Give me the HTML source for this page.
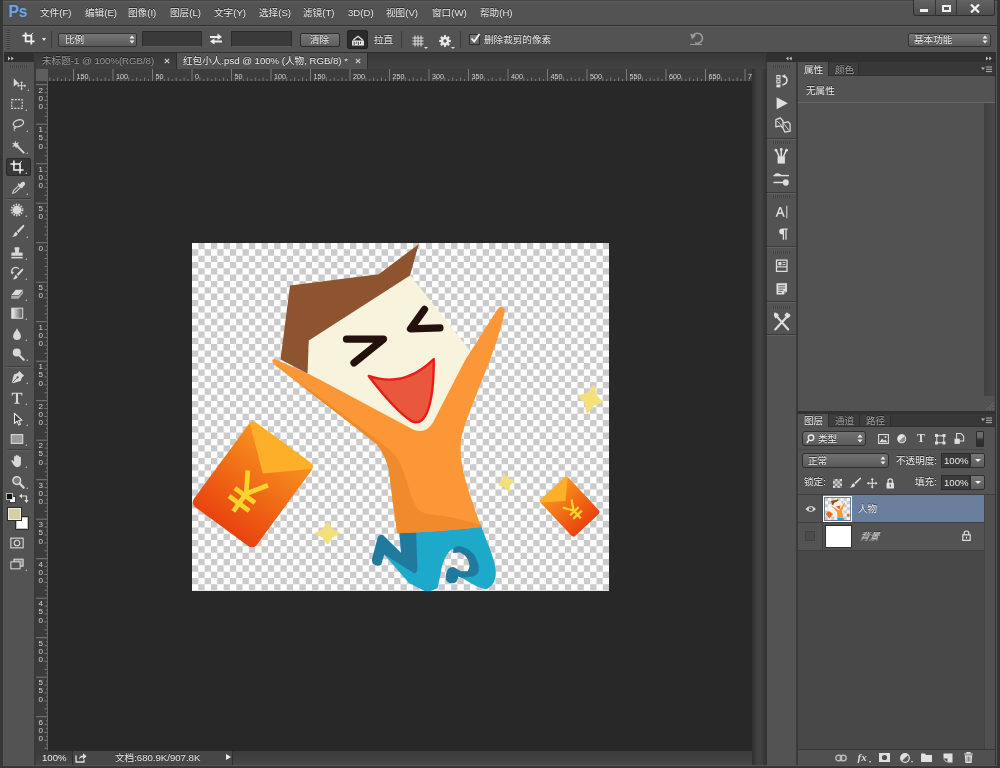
<!DOCTYPE html>
<html lang="zh"><head><meta charset="utf-8"><title>Photoshop</title>
<style>
*{box-sizing:border-box;margin:0;padding:0}
html,body{width:1000px;height:768px;overflow:hidden;background:#3a3a3a}
body{position:relative;font-family:"Liberation Sans","Noto Sans CJK SC",sans-serif;font-size:9.6px;color:#ebebeb;line-height:1}
.a{position:absolute}
.t{white-space:nowrap;display:inline-block;filter:drop-shadow(0 -0.8px 0 rgba(0,0,0,.55))}
.lbl{position:absolute;white-space:nowrap;will-change:transform}
.gs{will-change:transform}
svg{display:inline-block}
/* frame */
#menubar{left:3px;top:0;width:994px;height:26px;background:linear-gradient(#3c3c3c 0,#5c5c5c 1.5px,#535353 3px);border-bottom:1px solid #303030}
#optbar{left:3px;top:26px;width:994px;height:27px;background:linear-gradient(#636363 0,#535353 1.5px);border-bottom:1px solid #2e2e2e}
#tools{left:4px;top:53px;width:30px;height:712px;background:#535353}
#toolshead{left:4px;top:53px;width:30px;height:9px;background:#2f2f2f}
#doc{left:36px;top:53px;width:716px;height:712px;background:#282828}
#doctabs{left:36px;top:53px;width:729px;height:16px;background:linear-gradient(#383838,#424242)}
#hruler{left:36px;top:68.5px;width:716px;height:12.5px;background:#3d3d3d}
#vruler{left:36px;top:81px;width:12px;height:670px;background:#3b3b3b}
#status{left:36px;top:751px;width:716px;height:14px;background:linear-gradient(#3a3a3a,#474747)}
#gap{left:752px;top:69px;width:15px;height:696px;background:linear-gradient(90deg,#303030 0,#424242 40%,#434343 60%,#363636 85%,#323232 100%)}
#strip{left:767px;top:53px;width:29px;height:712px;background:#535353}
#striphead{left:766px;top:53px;width:31px;height:9px;background:#303030}
#rp{left:798px;top:53px;width:199px;height:712px;background:#535353}
#rphead{left:797px;top:53px;width:200px;height:9px;background:#303030}
</style></head><body>
<div id="menubar" class="a"></div>
<div id="optbar" class="a"></div>
<div id="tools" class="a"></div><div id="toolshead" class="a"></div>
<div id="doc" class="a"></div><div id="doctabs" class="a"></div><div id="hruler" class="a"></div><div id="vruler" class="a"></div><div id="status" class="a"></div>
<div id="gap" class="a"></div>
<div id="strip" class="a"></div><div id="striphead" class="a"></div>
<div id="rp" class="a"></div><div id="rphead" class="a"></div>
<div class="a" style="left:8.5px;top:3.5px;font-size:15.6px;font-weight:bold;color:#74a3d6;letter-spacing:-0.2px;text-shadow:0 0 3px #2a4f80">Ps</div>
<div class="lbl" style="left:40px;top:8px"><span class="t">文件(F)</span></div>
<div class="lbl" style="left:85px;top:8px"><span class="t">编辑(E)</span></div>
<div class="lbl" style="left:128px;top:8px"><span class="t">图像(I)</span></div>
<div class="lbl" style="left:170px;top:8px"><span class="t">图层(L)</span></div>
<div class="lbl" style="left:214px;top:8px"><span class="t">文字(Y)</span></div>
<div class="lbl" style="left:259px;top:8px"><span class="t">选择(S)</span></div>
<div class="lbl" style="left:303px;top:8px"><span class="t">滤镜(T)</span></div>
<div class="lbl" style="left:348px;top:8px"><span class="t">3D(D)</span></div>
<div class="lbl" style="left:386px;top:8px"><span class="t">视图(V)</span></div>
<div class="lbl" style="left:432px;top:8px"><span class="t">窗口(W)</span></div>
<div class="lbl" style="left:480px;top:8px"><span class="t">帮助(H)</span></div>
<div class="a" style="left:913px;top:0;width:82px;height:16px;border:1px solid #2e2e2e;border-top:0;border-radius:0 0 3px 3px;background:linear-gradient(#626262,#4e4e4e)"></div>
<div class="a" style="left:935px;top:0;width:1px;height:15px;background:#333"></div>
<div class="a" style="left:956px;top:0;width:1px;height:15px;background:#333"></div>
<div class="a" style="left:920px;top:9px;width:8px;height:3px;background:#f0f0f0"></div>
<div class="a" style="left:942px;top:5px;width:9px;height:7px;border:2px solid #f0f0f0"></div>
<svg class="a" style="left:970px;top:4px" width="10" height="9" viewBox="0 0 10 9"><path d="M1 0.5L9 8.5M9 0.5L1 8.5" stroke="#f0f0f0" stroke-width="2.2"/></svg>

<div class="a" style="left:7px;top:30px;width:3px;height:19px;background:repeating-linear-gradient(#3c3c3c 0 1px,#5c5c5c 1px 2px)"></div>
<svg class="a" style="left:21.5px;top:31.5px" width="13" height="13" viewBox="0 0 16 16"><path d="M4.5 0.5V11.5H15.5M0.5 4.5H11.5V15.5" fill="none" stroke="#f0f0f0" stroke-width="2.2"/><path d="M13.5 1L10.5 4.5" stroke="#e8e8e8" stroke-width="1.2"/></svg>
<div class="a" style="left:42px;top:38px;border:2.5px solid transparent;border-top:3px solid #e8e8e8"></div>
<div class="a" style="left:51px;top:31px;width:1px;height:17px;background:#3a3a3a"></div>
<div class="a" style="left:58px;top:32.5px;width:79px;height:14.5px;border:1px solid #333;border-radius:2px;background:linear-gradient(#757575,#5a5a5a)"></div>
<div class="lbl" style="left:65px;top:35px"><span class="t">比例</span></div>
<svg class="a" style="left:129px;top:35px" width="6" height="9" viewBox="0 0 6 9"><path d="M0.5 3.5L3 0.5L5.5 3.5ZM0.5 5.5L3 8.5L5.5 5.5Z" fill="#eee"/></svg>
<div class="a" style="left:142px;top:31px;width:60px;height:16px;background:#3a3a3a;border:1px solid #2b2b2b;border-bottom-color:#5a5a5a"></div>
<svg class="a" style="left:210px;top:33px" width="12" height="12" viewBox="0 0 12 12"><path d="M0 3H7.5V0.6L12 4L7.5 7V5H0ZM12 7.5H4.5V5.2L0 8.4L4.5 11.6V9.5H12Z" fill="#ececec"/></svg>
<div class="a" style="left:231px;top:31px;width:61px;height:16px;background:#3a3a3a;border:1px solid #2b2b2b;border-bottom-color:#5a5a5a"></div>
<div class="a" style="left:300px;top:33px;width:40px;height:13.5px;border:1px solid #2d2d2d;border-radius:2px;background:linear-gradient(#777,#5e5e5e)"></div>
<div class="lbl" style="left:310px;top:35px"><span class="t">清除</span></div>
<div class="a" style="left:347px;top:30px;width:21px;height:19px;background:#2b2b2b;border:1px solid #222;border-radius:2px"></div>
<svg class="a" style="left:350.5px;top:35px" width="14" height="11" viewBox="0 0 15 13"><path d="M0.5 6.5H14.5V12.5H0.5Z" fill="#e8e8e8"/><path d="M2 6L7.5 1.5L13 6" fill="none" stroke="#e8e8e8" stroke-width="1.6"/><path d="M3 8V12M5.5 8V10.5M8 8V12M10.5 8V10.5" stroke="#2b2b2b" stroke-width="1"/></svg>
<div class="lbl" style="left:374px;top:35px"><span class="t">拉直</span></div>
<div class="a" style="left:401px;top:31px;width:1px;height:17px;background:#3a3a3a"></div>
<svg class="a" style="left:411.5px;top:34.5px" width="12" height="12" viewBox="0 0 14 14"><path d="M0.5 3.5H13.5M0.5 7H13.5M0.5 10.5H13.5M3.5 0.5V13.5M7 0.5V13.5M10.5 0.5V13.5" stroke="#e8e8e8" stroke-width="1.1" fill="none"/></svg>
<div class="a" style="left:424px;top:47px;border:2px solid transparent;border-top:2.5px solid #ddd"></div>
<svg class="a" style="left:438.5px;top:34.5px" width="12" height="12" viewBox="-7 -7 14 14"><g fill="#e8e8e8"><circle r="4.6"/><g id="gt"><rect x="-1.3" y="-6.8" width="2.6" height="13.6"/><rect x="-6.8" y="-1.3" width="13.6" height="2.6"/></g><use href="#gt" transform="rotate(45)"/></g><circle r="2" fill="#535353"/></svg>
<div class="a" style="left:451px;top:47px;border:2px solid transparent;border-top:2.5px solid #ddd"></div>
<div class="a" style="left:460px;top:31px;width:1px;height:17px;background:#3a3a3a"></div>
<div class="a" style="left:469px;top:34px;width:11px;height:11px;background:linear-gradient(#7a7a7a,#606060);border:1px solid #2e2e2e"></div>
<svg class="a" style="left:470px;top:33px" width="11" height="11" viewBox="0 0 11 11"><path d="M1.5 5.5L4.2 8.5L9.5 1" fill="none" stroke="#f4f4f4" stroke-width="1.8"/></svg>
<div class="lbl" style="left:484px;top:35px"><span class="t">删除裁剪的像素</span></div>
<svg class="a" style="left:689px;top:30px" width="16" height="16" viewBox="0 0 16 16"><path d="M4 6A5 5 0 1 1 6 12.6" fill="none" stroke="#9a9a9a" stroke-width="1.6"/><path d="M1 3.5L7 5.5L3 9.5Z" fill="#9a9a9a"/><path d="M1 14.5H13" stroke="#9a9a9a" stroke-width="1"/></svg>
<div class="a" style="left:908px;top:32.5px;width:83px;height:14.5px;border:1px solid #333;border-radius:2px;background:linear-gradient(#757575,#5a5a5a)"></div>
<div class="lbl" style="left:914px;top:35px"><span class="t">基本功能</span></div>
<svg class="a" style="left:982px;top:35px" width="6" height="9" viewBox="0 0 6 9"><path d="M0.5 3.5L3 0.5L5.5 3.5ZM0.5 5.5L3 8.5L5.5 5.5Z" fill="#eee"/></svg>

<svg class="a" style="left:7.5px;top:55.5px" width="6.5" height="5" viewBox="0 0 8 6"><path d="M0 0.5L3 3L0 5.5ZM4 0.5L7 3L4 5.5Z" fill="#c4c4c4"/></svg>
<div class="a" style="left:10px;top:65px;width:17px;height:3px;background:repeating-linear-gradient(90deg,#424242 0 1px,#595959 1px 2px)"></div>
<div class="a" style="left:6px;top:158px;width:25px;height:18px;background:#383838;border-radius:2px;border:1px solid #2a2a2a"></div>
<div class="a" style="left:7px;top:197.5px;width:24px;height:1px;background:#3e3e3e;border-bottom:1px solid #606060;height:2px"></div>
<div class="a" style="left:7px;top:365.5px;width:24px;height:1px;background:#3e3e3e;border-bottom:1px solid #606060;height:2px"></div>
<div class="a" style="left:7px;top:449.0px;width:24px;height:1px;background:#3e3e3e;border-bottom:1px solid #606060;height:2px"></div>
<svg class="a" style="left:11.6px;top:77.0px" width="14" height="14" viewBox="0 0 16 16"><path d="M2 1.5V11L4.6 8.6L8.6 8.4Z" fill="#d8d8d8"/><path d="M11 6V14M7 10H15" stroke="#d8d8d8" stroke-width="1.1"/><path d="M11 4.8L12.6 6.8H9.4ZM11 15.2L12.6 13.2H9.4ZM5.8 10L7.8 8.4V11.6ZM16.2 10L14.2 8.4V11.6Z" fill="#d8d8d8"/></svg>
<div class="a" style="left:26.6px;top:89.0px;width:0;height:0;border-left:2.5px solid transparent;border-bottom:2.5px solid #b0b0b0"></div>
<svg class="a" style="left:10.0px;top:97.0px" width="14" height="14" viewBox="0 0 16 16"><rect x="2" y="3" width="12" height="10" fill="none" stroke="#d8d8d8" stroke-width="1.3" stroke-dasharray="2.2 1.4"/></svg>
<div class="a" style="left:25.0px;top:109.0px;width:0;height:0;border-left:2.5px solid transparent;border-bottom:2.5px solid #b0b0b0"></div>
<svg class="a" style="left:11.0px;top:118.0px" width="14" height="14" viewBox="0 0 16 16"><ellipse cx="8.5" cy="6" rx="6" ry="3.8" transform="rotate(-18 8.5 6)" fill="none" stroke="#d8d8d8" stroke-width="1.5"/><path d="M4.5 9.5C3 10.5 3.5 12.5 5 12C6 11.5 5 10 4 11.5C3.5 12.5 3.5 14 4.5 15" fill="none" stroke="#d8d8d8" stroke-width="1.1"/></svg>
<div class="a" style="left:26.0px;top:130.0px;width:0;height:0;border-left:2.5px solid transparent;border-bottom:2.5px solid #b0b0b0"></div>
<svg class="a" style="left:11.0px;top:139.5px" width="14" height="14" viewBox="0 0 16 16"><path d="M6.5 6.5L14.5 14.5" stroke="#d8d8d8" stroke-width="2.2" stroke-linecap="round"/><path d="M5 0.5L6 3.6L9.2 2.4L7.4 5L9.8 7L6.6 7L6 10L4.6 7.2L1.4 8L3.4 5.4L0.8 3.4L4 3.6Z" fill="#d8d8d8"/></svg>
<div class="a" style="left:26.0px;top:151.5px;width:0;height:0;border-left:2.5px solid transparent;border-bottom:2.5px solid #b0b0b0"></div>
<svg class="a" style="left:10.0px;top:160.0px" width="14" height="14" viewBox="0 0 16 16"><path d="M4.5 0.5V11.5H15.5M0.5 4.5H11.5V15.5" fill="none" stroke="#f2f2f2" stroke-width="1.8"/><path d="M13.5 1L10.5 4.5" stroke="#f2f2f2" stroke-width="1"/></svg>
<div class="a" style="left:25.0px;top:172.0px;width:0;height:0;border-left:2.5px solid transparent;border-bottom:2.5px solid #b0b0b0"></div>
<svg class="a" style="left:11.0px;top:181.0px" width="14" height="14" viewBox="0 0 16 16"><path d="M2 14L3 11L9 5L11 7L5 13Z" fill="none" stroke="#d8d8d8" stroke-width="1.2"/><path d="M8.5 3.5L12.5 7.5M10 5L12.5 2.2Q14 1 15 2.3Q15.8 3.4 14.6 4.6L12 7" fill="#d8d8d8" stroke="#d8d8d8" stroke-width="1.6" stroke-linecap="round"/></svg>
<div class="a" style="left:26.0px;top:193.0px;width:0;height:0;border-left:2.5px solid transparent;border-bottom:2.5px solid #b0b0b0"></div>
<svg class="a" style="left:10.0px;top:202.5px" width="14" height="14" viewBox="0 0 16 16"><circle cx="8" cy="8" r="5" fill="#d8d8d8"/><circle cx="8" cy="8" r="6.2" fill="none" stroke="#d8d8d8" stroke-width="2.2" stroke-dasharray="1.6 1.4"/></svg>
<div class="a" style="left:25.0px;top:214.5px;width:0;height:0;border-left:2.5px solid transparent;border-bottom:2.5px solid #b0b0b0"></div>
<svg class="a" style="left:10.5px;top:224.0px" width="14" height="14" viewBox="0 0 16 16"><path d="M14.8 1.2Q15.6 2 14.8 3L8.5 10.2L6.6 8.4L13.4 1.4Q14.2 0.7 14.8 1.2Z" fill="#d8d8d8"/><path d="M5.8 9.2L7.8 11.2Q7 14.5 1 14.8Q3.6 13 3.8 11.2Q4.2 9.4 5.8 9.2Z" fill="#d8d8d8"/></svg>
<div class="a" style="left:25.5px;top:236.0px;width:0;height:0;border-left:2.5px solid transparent;border-bottom:2.5px solid #b0b0b0"></div>
<svg class="a" style="left:10.0px;top:246.0px" width="14" height="14" viewBox="0 0 16 16"><path d="M6 1.5H10Q11 1.5 10.8 2.6L10 7.5H13.5Q14.5 7.5 14.5 8.5V11H1.5V8.5Q1.5 7.5 2.5 7.5H6L5.2 2.6Q5 1.5 6 1.5Z" fill="#d8d8d8"/><rect x="1.5" y="12.4" width="13" height="1.8" fill="#d8d8d8"/></svg>
<div class="a" style="left:25.0px;top:258.0px;width:0;height:0;border-left:2.5px solid transparent;border-bottom:2.5px solid #b0b0b0"></div>
<svg class="a" style="left:10.0px;top:266.0px" width="14" height="14" viewBox="0 0 16 16"><path d="M14.8 3.2Q15.6 4 14.8 5L9.5 11.2L7.6 9.4L13.4 3.4Q14.2 2.7 14.8 3.2Z" fill="#d8d8d8"/><path d="M6.8 10.2L8.8 12.2Q8 15 3 15.2Q5 13.6 5.2 12.2Q5.4 10.6 6.8 10.2Z" fill="#d8d8d8"/><path d="M2.5 8A4.5 4.5 0 0 1 10 3.2" fill="none" stroke="#d8d8d8" stroke-width="1.4"/><path d="M0.6 6.4L4.6 6.8L2.4 10Z" fill="#d8d8d8"/></svg>
<div class="a" style="left:25.0px;top:278.0px;width:0;height:0;border-left:2.5px solid transparent;border-bottom:2.5px solid #b0b0b0"></div>
<svg class="a" style="left:10.0px;top:287.0px" width="14" height="14" viewBox="0 0 16 16"><path d="M6.5 3L15 3L9.8 9.5L1.4 9.5Z" fill="#d8d8d8"/><path d="M1.4 10.4H9.8L15 4V7.2L9.8 13.4H1.4Z" fill="#a8a8a8"/></svg>
<div class="a" style="left:25.0px;top:299.0px;width:0;height:0;border-left:2.5px solid transparent;border-bottom:2.5px solid #b0b0b0"></div>
<svg class="a" style="left:10.0px;top:306.0px" width="14" height="14" viewBox="0 0 16 16"><defs><linearGradient id="tg" x1="0" y1="0" x2="1" y2="0"><stop offset="0" stop-color="#f4f4f4"/><stop offset="1" stop-color="#555"/></linearGradient></defs><rect x="2" y="2.5" width="12.5" height="11.5" fill="url(#tg)" stroke="#d8d8d8" stroke-width="1.2"/></svg>
<div class="a" style="left:25.0px;top:318.0px;width:0;height:0;border-left:2.5px solid transparent;border-bottom:2.5px solid #b0b0b0"></div>
<svg class="a" style="left:10.0px;top:326.5px" width="14" height="14" viewBox="0 0 16 16"><path d="M8 1.5C9.6 5 12.5 7.4 12.5 10.4A4.5 4.5 0 0 1 3.5 10.4C3.5 7.4 6.4 5 8 1.5Z" fill="#d8d8d8"/></svg>
<div class="a" style="left:25.0px;top:338.5px;width:0;height:0;border-left:2.5px solid transparent;border-bottom:2.5px solid #b0b0b0"></div>
<svg class="a" style="left:10.5px;top:347.0px" width="14" height="14" viewBox="0 0 16 16"><circle cx="6.6" cy="6.2" r="4.6" fill="#d8d8d8"/><path d="M9.8 9.6L14.5 14.5" stroke="#d8d8d8" stroke-width="2.4" stroke-linecap="round"/></svg>
<div class="a" style="left:25.5px;top:359.0px;width:0;height:0;border-left:2.5px solid transparent;border-bottom:2.5px solid #b0b0b0"></div>
<svg class="a" style="left:10.5px;top:369.5px" width="14" height="14" viewBox="0 0 16 16"><path d="M9.5 1L15 6.5L12.6 8.2L11 12.6L2 15L1 14L3.4 5L7.8 3.4Z" fill="#d8d8d8"/><path d="M1.8 14.2L7 9" stroke="#535353" stroke-width="1"/><circle cx="7.6" cy="8.4" r="1.3" fill="#535353"/></svg>
<div class="a" style="left:25.5px;top:381.5px;width:0;height:0;border-left:2.5px solid transparent;border-bottom:2.5px solid #b0b0b0"></div>
<svg class="a" style="left:10.0px;top:391.0px" width="14" height="14" viewBox="0 0 16 16"><path d="M2 2H14V5.4H13.2Q13 3.4 11.4 3.2H9.2V12.6Q9.2 13.6 11 13.7V14.5H5V13.7Q6.8 13.6 6.8 12.6V3.2H4.6Q3 3.4 2.8 5.4H2Z" fill="#d8d8d8"/></svg>
<div class="a" style="left:25.0px;top:403.0px;width:0;height:0;border-left:2.5px solid transparent;border-bottom:2.5px solid #b0b0b0"></div>
<svg class="a" style="left:10.5px;top:411.5px" width="14" height="14" viewBox="0 0 16 16"><path d="M4 1.5V13L6.8 10.4L8.8 15L10.8 14.1L8.8 9.7L12.6 9.5Z" fill="#3a3a3a" stroke="#f0f0f0" stroke-width="1.2" stroke-linejoin="round"/></svg>
<div class="a" style="left:25.5px;top:423.5px;width:0;height:0;border-left:2.5px solid transparent;border-bottom:2.5px solid #b0b0b0"></div>
<svg class="a" style="left:10.0px;top:432.0px" width="14" height="14" viewBox="0 0 16 16"><rect x="1.5" y="3" width="13" height="10" fill="#9a9a9a" stroke="#d8d8d8" stroke-width="1.3"/></svg>
<div class="a" style="left:25.0px;top:444.0px;width:0;height:0;border-left:2.5px solid transparent;border-bottom:2.5px solid #b0b0b0"></div>
<svg class="a" style="left:10.0px;top:454.0px" width="14" height="14" viewBox="0 0 16 16"><path d="M4.6 9V3.6Q4.6 2.4 5.6 2.4Q6.5 2.4 6.5 3.6V2.2Q6.5 1 7.6 1Q8.6 1 8.6 2.2V2.8Q8.6 1.8 9.6 1.8Q10.6 1.8 10.6 3V4Q10.6 3.2 11.5 3.2Q12.5 3.2 12.5 4.4V10Q12.5 15 8.2 15Q5.6 15 4.2 12.6L1.6 8.4Q1.2 7.4 2 7Q2.8 6.6 3.6 7.6Z" fill="#d8d8d8"/></svg>
<div class="a" style="left:25.0px;top:466.0px;width:0;height:0;border-left:2.5px solid transparent;border-bottom:2.5px solid #b0b0b0"></div>
<svg class="a" style="left:10.5px;top:475.0px" width="14" height="14" viewBox="0 0 16 16"><circle cx="6.6" cy="6.4" r="4.4" fill="#7a7a7a" stroke="#d8d8d8" stroke-width="1.7"/><path d="M10 9.8L14.4 14.4" stroke="#d8d8d8" stroke-width="2.6" stroke-linecap="round"/></svg>
<div class="a" style="left:25.5px;top:487.0px;width:0;height:0;border-left:2.5px solid transparent;border-bottom:2.5px solid #b0b0b0"></div>
<svg class="a" style="left:10.0px;top:536.0px" width="14" height="14" viewBox="0 0 16 16"><rect x="1" y="2.5" width="14" height="11" fill="none" stroke="#d8d8d8" stroke-width="1.3"/><circle cx="8" cy="8" r="3.2" fill="none" stroke="#d8d8d8" stroke-width="1.3"/></svg>
<svg class="a" style="left:10.0px;top:556.5px" width="14" height="14" viewBox="0 0 16 16"><rect x="4.5" y="2.5" width="10.5" height="8" fill="#8a8a8a" stroke="#d8d8d8" stroke-width="1.2"/><rect x="1" y="5.5" width="10.5" height="8" fill="#535353" stroke="#d8d8d8" stroke-width="1.2"/></svg>
<div class="a" style="left:25.0px;top:568.5px;width:0;height:0;border-left:2.5px solid transparent;border-bottom:2.5px solid #b0b0b0"></div>
<svg class="a" style="left:6px;top:493px" width="10" height="10" viewBox="0 0 10 10"><rect x="3.5" y="3.5" width="6" height="6" fill="#fff" stroke="#222" stroke-width="0.8"/><rect x="0.5" y="0.5" width="6" height="6" fill="#111" stroke="#ddd" stroke-width="0.8"/></svg>
<svg class="a" style="left:19px;top:493px" width="10" height="10" viewBox="0 0 10 10"><path d="M2 3H7.5V8" fill="none" stroke="#ddd" stroke-width="1.2"/><path d="M0 3L3 0.8V5.2ZM7.5 10L5.3 7H9.7Z" fill="#ddd"/></svg>
<div class="a" style="left:14.5px;top:515.5px;width:14.5px;height:14.5px;background:#fff;border:1px solid #2a2a2a;box-shadow:0 0 0 1px #bdbdbd inset"></div>
<div class="a" style="left:7px;top:506.5px;width:14.5px;height:14.5px;background:#d8cfa1;border:1px solid #2a2a2a;box-shadow:0 0 0 1px #eee inset"></div>
<div class="a" style="left:176px;top:53px;width:192px;height:16px;background:#535353;border-left:1px solid #2c2c2c;border-right:1px solid #2c2c2c"></div>
<div class="lbl" style="left:42px;top:56px;color:#9c9c9c"><span class="t">未标题-1 @ 100%(RGB/8)</span></div>
<svg class="a" style="left:164px;top:58px" width="6" height="6" viewBox="0 0 6 6"><path d="M0.8 0.8L5.2 5.2M5.2 0.8L0.8 5.2" stroke="#d0d0d0" stroke-width="1.1"/></svg>
<div class="lbl" style="left:183px;top:56px;color:#eee"><span class="t">红包小人.psd @ 100% (人物, RGB/8) *</span></div>
<svg class="a" style="left:355px;top:58px" width="6" height="6" viewBox="0 0 6 6"><path d="M0.8 0.8L5.2 5.2M5.2 0.8L0.8 5.2" stroke="#d0d0d0" stroke-width="1.1"/></svg>
<svg class="a gs" style="left:36px;top:69px" width="716" height="12" viewBox="36 69 716 12"><rect x="36" y="69" width="12" height="12" fill="#5e5e5e"/><path d="M49.80 77.5V81M53.75 79V81M57.70 77.5V81M61.65 79V81M65.60 77.5V81M69.55 79V81M73.50 69V81M77.45 79V81M81.40 77.5V81M85.35 79V81M89.30 77.5V81M93.25 79V81M97.20 77.5V81M101.15 79V81M105.10 77.5V81M109.05 79V81M113.00 69V81M116.95 79V81M120.90 77.5V81M124.85 79V81M128.80 77.5V81M132.75 79V81M136.70 77.5V81M140.65 79V81M144.60 77.5V81M148.55 79V81M152.50 69V81M156.45 79V81M160.40 77.5V81M164.35 79V81M168.30 77.5V81M172.25 79V81M176.20 77.5V81M180.15 79V81M184.10 77.5V81M188.05 79V81M192.00 69V81M195.95 79V81M199.90 77.5V81M203.85 79V81M207.80 77.5V81M211.75 79V81M215.70 77.5V81M219.65 79V81M223.60 77.5V81M227.55 79V81M231.50 69V81M235.45 79V81M239.40 77.5V81M243.35 79V81M247.30 77.5V81M251.25 79V81M255.20 77.5V81M259.15 79V81M263.10 77.5V81M267.05 79V81M271.00 69V81M274.95 79V81M278.90 77.5V81M282.85 79V81M286.80 77.5V81M290.75 79V81M294.70 77.5V81M298.65 79V81M302.60 77.5V81M306.55 79V81M310.50 69V81M314.45 79V81M318.40 77.5V81M322.35 79V81M326.30 77.5V81M330.25 79V81M334.20 77.5V81M338.15 79V81M342.10 77.5V81M346.05 79V81M350.00 69V81M353.95 79V81M357.90 77.5V81M361.85 79V81M365.80 77.5V81M369.75 79V81M373.70 77.5V81M377.65 79V81M381.60 77.5V81M385.55 79V81M389.50 69V81M393.45 79V81M397.40 77.5V81M401.35 79V81M405.30 77.5V81M409.25 79V81M413.20 77.5V81M417.15 79V81M421.10 77.5V81M425.05 79V81M429.00 69V81M432.95 79V81M436.90 77.5V81M440.85 79V81M444.80 77.5V81M448.75 79V81M452.70 77.5V81M456.65 79V81M460.60 77.5V81M464.55 79V81M468.50 69V81M472.45 79V81M476.40 77.5V81M480.35 79V81M484.30 77.5V81M488.25 79V81M492.20 77.5V81M496.15 79V81M500.10 77.5V81M504.05 79V81M508.00 69V81M511.95 79V81M515.90 77.5V81M519.85 79V81M523.80 77.5V81M527.75 79V81M531.70 77.5V81M535.65 79V81M539.60 77.5V81M543.55 79V81M547.50 69V81M551.45 79V81M555.40 77.5V81M559.35 79V81M563.30 77.5V81M567.25 79V81M571.20 77.5V81M575.15 79V81M579.10 77.5V81M583.05 79V81M587.00 69V81M590.95 79V81M594.90 77.5V81M598.85 79V81M602.80 77.5V81M606.75 79V81M610.70 77.5V81M614.65 79V81M618.60 77.5V81M622.55 79V81M626.50 69V81M630.45 79V81M634.40 77.5V81M638.35 79V81M642.30 77.5V81M646.25 79V81M650.20 77.5V81M654.15 79V81M658.10 77.5V81M662.05 79V81M666.00 69V81M669.95 79V81M673.90 77.5V81M677.85 79V81M681.80 77.5V81M685.75 79V81M689.70 77.5V81M693.65 79V81M697.60 77.5V81M701.55 79V81M705.50 69V81M709.45 79V81M713.40 77.5V81M717.35 79V81M721.30 77.5V81M725.25 79V81M729.20 77.5V81M733.15 79V81M737.10 77.5V81M741.05 79V81M745.00 69V81M748.95 79V81" stroke="#8c8c8c" stroke-width="0.8" fill="none"/><text x="76.5" y="79" font-size="8" fill="#d4d4d4" font-family="Liberation Sans, sans-serif" transform="translate(76.5 0) scale(0.9 1) translate(-76.5 0)">150</text><text x="116.0" y="79" font-size="8" fill="#d4d4d4" font-family="Liberation Sans, sans-serif" transform="translate(116.0 0) scale(0.9 1) translate(-116.0 0)">100</text><text x="155.5" y="79" font-size="8" fill="#d4d4d4" font-family="Liberation Sans, sans-serif" transform="translate(155.5 0) scale(0.9 1) translate(-155.5 0)">50</text><text x="195.0" y="79" font-size="8" fill="#d4d4d4" font-family="Liberation Sans, sans-serif" transform="translate(195.0 0) scale(0.9 1) translate(-195.0 0)">0</text><text x="234.5" y="79" font-size="8" fill="#d4d4d4" font-family="Liberation Sans, sans-serif" transform="translate(234.5 0) scale(0.9 1) translate(-234.5 0)">50</text><text x="274.0" y="79" font-size="8" fill="#d4d4d4" font-family="Liberation Sans, sans-serif" transform="translate(274.0 0) scale(0.9 1) translate(-274.0 0)">100</text><text x="313.5" y="79" font-size="8" fill="#d4d4d4" font-family="Liberation Sans, sans-serif" transform="translate(313.5 0) scale(0.9 1) translate(-313.5 0)">150</text><text x="353.0" y="79" font-size="8" fill="#d4d4d4" font-family="Liberation Sans, sans-serif" transform="translate(353.0 0) scale(0.9 1) translate(-353.0 0)">200</text><text x="392.5" y="79" font-size="8" fill="#d4d4d4" font-family="Liberation Sans, sans-serif" transform="translate(392.5 0) scale(0.9 1) translate(-392.5 0)">250</text><text x="432.0" y="79" font-size="8" fill="#d4d4d4" font-family="Liberation Sans, sans-serif" transform="translate(432.0 0) scale(0.9 1) translate(-432.0 0)">300</text><text x="471.5" y="79" font-size="8" fill="#d4d4d4" font-family="Liberation Sans, sans-serif" transform="translate(471.5 0) scale(0.9 1) translate(-471.5 0)">350</text><text x="511.0" y="79" font-size="8" fill="#d4d4d4" font-family="Liberation Sans, sans-serif" transform="translate(511.0 0) scale(0.9 1) translate(-511.0 0)">400</text><text x="550.5" y="79" font-size="8" fill="#d4d4d4" font-family="Liberation Sans, sans-serif" transform="translate(550.5 0) scale(0.9 1) translate(-550.5 0)">450</text><text x="590.0" y="79" font-size="8" fill="#d4d4d4" font-family="Liberation Sans, sans-serif" transform="translate(590.0 0) scale(0.9 1) translate(-590.0 0)">500</text><text x="629.5" y="79" font-size="8" fill="#d4d4d4" font-family="Liberation Sans, sans-serif" transform="translate(629.5 0) scale(0.9 1) translate(-629.5 0)">550</text><text x="669.0" y="79" font-size="8" fill="#d4d4d4" font-family="Liberation Sans, sans-serif" transform="translate(669.0 0) scale(0.9 1) translate(-669.0 0)">600</text><text x="708.5" y="79" font-size="8" fill="#d4d4d4" font-family="Liberation Sans, sans-serif" transform="translate(708.5 0) scale(0.9 1) translate(-708.5 0)">650</text><text x="748.0" y="79" font-size="8" fill="#d4d4d4" font-family="Liberation Sans, sans-serif" transform="translate(748.0 0) scale(0.9 1) translate(-748.0 0)">700</text></svg>
<svg class="a gs" style="left:36px;top:81px" width="12" height="669" viewBox="36 81 12 669"><path d="M36 84.70H48M46 88.65H48M44.5 92.60H48M46 96.55H48M44.5 100.50H48M46 104.45H48M44.5 108.40H48M46 112.35H48M44.5 116.30H48M46 120.25H48M36 124.20H48M46 128.15H48M44.5 132.10H48M46 136.05H48M44.5 140.00H48M46 143.95H48M44.5 147.90H48M46 151.85H48M44.5 155.80H48M46 159.75H48M36 163.70H48M46 167.65H48M44.5 171.60H48M46 175.55H48M44.5 179.50H48M46 183.45H48M44.5 187.40H48M46 191.35H48M44.5 195.30H48M46 199.25H48M36 203.20H48M46 207.15H48M44.5 211.10H48M46 215.05H48M44.5 219.00H48M46 222.95H48M44.5 226.90H48M46 230.85H48M44.5 234.80H48M46 238.75H48M36 242.70H48M46 246.65H48M44.5 250.60H48M46 254.55H48M44.5 258.50H48M46 262.45H48M44.5 266.40H48M46 270.35H48M44.5 274.30H48M46 278.25H48M36 282.20H48M46 286.15H48M44.5 290.10H48M46 294.05H48M44.5 298.00H48M46 301.95H48M44.5 305.90H48M46 309.85H48M44.5 313.80H48M46 317.75H48M36 321.70H48M46 325.65H48M44.5 329.60H48M46 333.55H48M44.5 337.50H48M46 341.45H48M44.5 345.40H48M46 349.35H48M44.5 353.30H48M46 357.25H48M36 361.20H48M46 365.15H48M44.5 369.10H48M46 373.05H48M44.5 377.00H48M46 380.95H48M44.5 384.90H48M46 388.85H48M44.5 392.80H48M46 396.75H48M36 400.70H48M46 404.65H48M44.5 408.60H48M46 412.55H48M44.5 416.50H48M46 420.45H48M44.5 424.40H48M46 428.35H48M44.5 432.30H48M46 436.25H48M36 440.20H48M46 444.15H48M44.5 448.10H48M46 452.05H48M44.5 456.00H48M46 459.95H48M44.5 463.90H48M46 467.85H48M44.5 471.80H48M46 475.75H48M36 479.70H48M46 483.65H48M44.5 487.60H48M46 491.55H48M44.5 495.50H48M46 499.45H48M44.5 503.40H48M46 507.35H48M44.5 511.30H48M46 515.25H48M36 519.20H48M46 523.15H48M44.5 527.10H48M46 531.05H48M44.5 535.00H48M46 538.95H48M44.5 542.90H48M46 546.85H48M44.5 550.80H48M46 554.75H48M36 558.70H48M46 562.65H48M44.5 566.60H48M46 570.55H48M44.5 574.50H48M46 578.45H48M44.5 582.40H48M46 586.35H48M44.5 590.30H48M46 594.25H48M36 598.20H48M46 602.15H48M44.5 606.10H48M46 610.05H48M44.5 614.00H48M46 617.95H48M44.5 621.90H48M46 625.85H48M44.5 629.80H48M46 633.75H48M36 637.70H48M46 641.65H48M44.5 645.60H48M46 649.55H48M44.5 653.50H48M46 657.45H48M44.5 661.40H48M46 665.35H48M44.5 669.30H48M46 673.25H48M36 677.20H48M46 681.15H48M44.5 685.10H48M46 689.05H48M44.5 693.00H48M46 696.95H48M44.5 700.90H48M46 704.85H48M44.5 708.80H48M46 712.75H48M36 716.70H48M46 720.65H48M44.5 724.60H48M46 728.55H48M44.5 732.50H48M46 736.45H48M44.5 740.40H48M46 744.35H48M44.5 748.30H48" stroke="#8c8c8c" stroke-width="0.8" fill="none"/><text x="38.5" y="92.7" font-size="8" fill="#d4d4d4" font-family="Liberation Sans, sans-serif">2</text><text x="38.5" y="100.9" font-size="8" fill="#d4d4d4" font-family="Liberation Sans, sans-serif">0</text><text x="38.5" y="109.1" font-size="8" fill="#d4d4d4" font-family="Liberation Sans, sans-serif">0</text><text x="38.5" y="132.2" font-size="8" fill="#d4d4d4" font-family="Liberation Sans, sans-serif">1</text><text x="38.5" y="140.4" font-size="8" fill="#d4d4d4" font-family="Liberation Sans, sans-serif">5</text><text x="38.5" y="148.6" font-size="8" fill="#d4d4d4" font-family="Liberation Sans, sans-serif">0</text><text x="38.5" y="171.7" font-size="8" fill="#d4d4d4" font-family="Liberation Sans, sans-serif">1</text><text x="38.5" y="179.9" font-size="8" fill="#d4d4d4" font-family="Liberation Sans, sans-serif">0</text><text x="38.5" y="188.1" font-size="8" fill="#d4d4d4" font-family="Liberation Sans, sans-serif">0</text><text x="38.5" y="211.2" font-size="8" fill="#d4d4d4" font-family="Liberation Sans, sans-serif">5</text><text x="38.5" y="219.4" font-size="8" fill="#d4d4d4" font-family="Liberation Sans, sans-serif">0</text><text x="38.5" y="250.7" font-size="8" fill="#d4d4d4" font-family="Liberation Sans, sans-serif">0</text><text x="38.5" y="290.2" font-size="8" fill="#d4d4d4" font-family="Liberation Sans, sans-serif">5</text><text x="38.5" y="298.4" font-size="8" fill="#d4d4d4" font-family="Liberation Sans, sans-serif">0</text><text x="38.5" y="329.7" font-size="8" fill="#d4d4d4" font-family="Liberation Sans, sans-serif">1</text><text x="38.5" y="337.9" font-size="8" fill="#d4d4d4" font-family="Liberation Sans, sans-serif">0</text><text x="38.5" y="346.1" font-size="8" fill="#d4d4d4" font-family="Liberation Sans, sans-serif">0</text><text x="38.5" y="369.2" font-size="8" fill="#d4d4d4" font-family="Liberation Sans, sans-serif">1</text><text x="38.5" y="377.4" font-size="8" fill="#d4d4d4" font-family="Liberation Sans, sans-serif">5</text><text x="38.5" y="385.6" font-size="8" fill="#d4d4d4" font-family="Liberation Sans, sans-serif">0</text><text x="38.5" y="408.7" font-size="8" fill="#d4d4d4" font-family="Liberation Sans, sans-serif">2</text><text x="38.5" y="416.9" font-size="8" fill="#d4d4d4" font-family="Liberation Sans, sans-serif">0</text><text x="38.5" y="425.1" font-size="8" fill="#d4d4d4" font-family="Liberation Sans, sans-serif">0</text><text x="38.5" y="448.2" font-size="8" fill="#d4d4d4" font-family="Liberation Sans, sans-serif">2</text><text x="38.5" y="456.4" font-size="8" fill="#d4d4d4" font-family="Liberation Sans, sans-serif">5</text><text x="38.5" y="464.6" font-size="8" fill="#d4d4d4" font-family="Liberation Sans, sans-serif">0</text><text x="38.5" y="487.7" font-size="8" fill="#d4d4d4" font-family="Liberation Sans, sans-serif">3</text><text x="38.5" y="495.9" font-size="8" fill="#d4d4d4" font-family="Liberation Sans, sans-serif">0</text><text x="38.5" y="504.1" font-size="8" fill="#d4d4d4" font-family="Liberation Sans, sans-serif">0</text><text x="38.5" y="527.2" font-size="8" fill="#d4d4d4" font-family="Liberation Sans, sans-serif">3</text><text x="38.5" y="535.4" font-size="8" fill="#d4d4d4" font-family="Liberation Sans, sans-serif">5</text><text x="38.5" y="543.6" font-size="8" fill="#d4d4d4" font-family="Liberation Sans, sans-serif">0</text><text x="38.5" y="566.7" font-size="8" fill="#d4d4d4" font-family="Liberation Sans, sans-serif">4</text><text x="38.5" y="574.9" font-size="8" fill="#d4d4d4" font-family="Liberation Sans, sans-serif">0</text><text x="38.5" y="583.1" font-size="8" fill="#d4d4d4" font-family="Liberation Sans, sans-serif">0</text><text x="38.5" y="606.2" font-size="8" fill="#d4d4d4" font-family="Liberation Sans, sans-serif">4</text><text x="38.5" y="614.4" font-size="8" fill="#d4d4d4" font-family="Liberation Sans, sans-serif">5</text><text x="38.5" y="622.6" font-size="8" fill="#d4d4d4" font-family="Liberation Sans, sans-serif">0</text><text x="38.5" y="645.7" font-size="8" fill="#d4d4d4" font-family="Liberation Sans, sans-serif">5</text><text x="38.5" y="653.9" font-size="8" fill="#d4d4d4" font-family="Liberation Sans, sans-serif">0</text><text x="38.5" y="662.1" font-size="8" fill="#d4d4d4" font-family="Liberation Sans, sans-serif">0</text><text x="38.5" y="685.2" font-size="8" fill="#d4d4d4" font-family="Liberation Sans, sans-serif">5</text><text x="38.5" y="693.4" font-size="8" fill="#d4d4d4" font-family="Liberation Sans, sans-serif">5</text><text x="38.5" y="701.6" font-size="8" fill="#d4d4d4" font-family="Liberation Sans, sans-serif">0</text><text x="38.5" y="724.7" font-size="8" fill="#d4d4d4" font-family="Liberation Sans, sans-serif">6</text><text x="38.5" y="732.9" font-size="8" fill="#d4d4d4" font-family="Liberation Sans, sans-serif">0</text><text x="38.5" y="741.1" font-size="8" fill="#d4d4d4" font-family="Liberation Sans, sans-serif">0</text><path d="M47.5 81V750" stroke="#686868" stroke-width="1"/></svg>
<div class="a" style="left:72px;top:751px;width:161px;height:14px;background:#474747;border-left:1px solid #2e2e2e;border-right:1px solid #2e2e2e"></div>
<div class="lbl" style="left:42px;top:753px">100%</div>
<svg class="a" style="left:75px;top:752px" width="12" height="11" viewBox="0 0 12 11"><path d="M1 3.5V10H9V7.5" fill="none" stroke="#ddd" stroke-width="1.3"/><path d="M4 7.5C4 4.5 6 3.4 8 3.4V1.2L11.6 4.3L8 7.4V5.3C6.3 5.3 5 6 4 7.5Z" fill="#ddd"/></svg>
<div class="lbl" style="left:115px;top:753px"><span class="t">文档:680.9K/907.8K</span></div>
<div class="a" style="left:226px;top:754px;border:3.5px solid transparent;border-left:5.5px solid #eee"></div>
<div class="a" style="left:192px;top:242.6px;width:417px;height:348.3px;background:#fff;overflow:hidden">
<svg class="a" style="left:0;top:0" width="417" height="348.3" viewBox="192 242.6 417 348.3">
<defs>
<linearGradient id="eg" x1="0" y1="0" x2="0" y2="1"><stop offset="0" stop-color="#F8951F"/><stop offset="1" stop-color="#E9430F"/></linearGradient>
<g id="env"><rect x="-37.5" y="-50" width="75" height="100" rx="6" fill="url(#eg)"/><path d="M-37,-46Q-37.5,-50 -33,-50L33,-50Q37.5,-50 37,-46L1.5,-14.4Z" fill="#FDAF2A"/><g transform="translate(0.2,10.7)" stroke="#FAD42C" stroke-width="4.6" fill="none"><path d="M-12,-19L0,0L12,-19M0,0V21M-12,2H12M-12,11.5H12"/></g></g>
<path id="star" d="M0,-10L3.4,-3.4L10,0L3.4,3.4L0,10L-3.4,3.4L-10,0L-3.4,-3.4Z" fill="#F4E07A" stroke="#F4E07A" stroke-width="2.2" stroke-linejoin="round"/>
</defs>
<rect x="192" y="242.4" width="417" height="349" fill="#fff"/><path d="M192 245.76H609M192 258.40H609M192 271.04H609M192 283.68H609M192 296.32H609M192 308.96H609M192 321.60H609M192 334.24H609M192 346.88H609M192 359.52H609M192 372.16H609M192 384.80H609M192 397.44H609M192 410.08H609M192 422.72H609M192 435.36H609M192 448.00H609M192 460.64H609M192 473.28H609M192 485.92H609M192 498.56H609M192 511.20H609M192 523.84H609M192 536.48H609M192 549.12H609M192 561.76H609M192 574.40H609M192 587.04H609" stroke="#cbcbcb" stroke-width="6.32" stroke-dasharray="6.32 6.32" stroke-dashoffset="6.32" fill="none"/><path d="M192 252.08H609M192 264.72H609M192 277.36H609M192 290.00H609M192 302.64H609M192 315.28H609M192 327.92H609M192 340.56H609M192 353.20H609M192 365.84H609M192 378.48H609M192 391.12H609M192 403.76H609M192 416.40H609M192 429.04H609M192 441.68H609M192 454.32H609M192 466.96H609M192 479.60H609M192 492.24H609M192 504.88H609M192 517.52H609M192 530.16H609M192 542.80H609M192 555.44H609M192 568.08H609M192 580.72H609M192 593.36H609" stroke="#cbcbcb" stroke-width="6.32" stroke-dasharray="6.32 6.32" fill="none"/>
<!-- pants -->
<path d="M399.2,531L480.5,524C487,541 494,558 495.4,567C496.5,576 495.5,584 487,588.5C480,589 470,582 461,576.8L472.7,570.9L470,559L461,551.4L453.2,548.1C447,551 442,562 440.9,572.2L437.6,587.8L427.2,592L409,582.6L384.3,554L401.2,552.7Z" fill="#1DA9C9"/>
<path d="M377.8,536.5Q380,533.5 383,534.5L401.2,552.7L399.2,531L416.1,531L417.4,568Q417.5,572 414.2,572.9L384.3,554L381.1,564.4Q377,567 372.6,563.1L371.9,559.2Z" fill="#1F7A9E"/>
<path d="M453.2,548.1C457,545.5 460,545.5 463.6,546.9C469,549 473.5,552.5 475.3,556.6C478,562 479.5,566 478.6,570.9C477.5,574 475.5,575.5 472.7,576.1L461,577.4L458.4,576.1C457.5,580 456.5,582 454.5,582.6C452,583.2 449,582.8 447.4,581.3C445.5,579 445.3,576 446.1,573.5C446.8,570.5 447.8,568.5 449.3,567.6C451,566.6 452.8,566.5 454.5,567L461,570.9L467.5,570.9C469,569 469.6,566.5 469.4,564.4C468.8,561 467.8,558.5 466.2,556.6C464.3,554.4 462,552.8 459.7,552L453.2,552.7Z" fill="#1F7A9E"/>
<!-- body -->
<path d="M274,358.3L310,374L420,430L470,352L497,309.5Q501.5,303 505,310C501,330 491,358 484.6,373.3C478,390 468,415 462.7,431.7C458.5,447 461,464 465.7,480.2C469,492 474,507 481.2,526.6Q440,531.5 397.4,532.8L392.8,502C391.5,490 390.5,482 389.2,472.9C388,463 383,451 376.4,443.7L358.2,429.2L274,364Q270.5,360 274,358.3Z" fill="#FC9737"/>
<path d="M300,384L358.2,429.2L376.4,443.7C383,451 388,463 389.2,472.9C390.5,482 391.5,490 392.8,502L397.4,532.8Q440,531.5 481.2,526.6L480.3,525.2C475,523 472,522 467.6,521.2C461,519.5 456,517.5 449.3,516.6C443,515.5 437,515 431,513.9C425,513 421,512 418.4,509.3C415,505 413,500 411,494.8C408.5,487 406.5,480 403.8,472.9C401.5,466 399,460 394.7,454.7C389,448 381,443 372.8,436.4L310,389Z" fill="#EF8A2D"/>
<!-- head -->
<path d="M308.75,340L410,274.5L470,350L433,422Q426,433.5 414,429.5L307.5,372.5Z" fill="#F8F3DC"/>
<path d="M418.75,243.75L410,275L308.75,340L307.5,373L280.5,359L290,285L378.75,273.75Z" fill="#8E5430"/>
<path d="M346.5,338.75L383.5,338.75L354,362.5" fill="none" stroke="#24110C" stroke-width="7.2" stroke-linecap="round" stroke-linejoin="round"/>
<path d="M424.5,309L410.5,328.5L440,327.5" fill="none" stroke="#24110C" stroke-width="7.2" stroke-linecap="round" stroke-linejoin="round"/>
<path d="M368.75,375.5Q404,388 433.75,358.75Q434,395 427,412Q421,425 412,421Q395,410 368.75,375.5Z" fill="#E9573C" stroke="#EE1A18" stroke-width="2.4" stroke-linejoin="round"/>
<!-- envelopes -->
<use href="#env" transform="translate(252.6,484.3) rotate(36.3) scale(1.04)"/>
<use href="#env" transform="translate(569.9,506.3) rotate(-43) scale(0.5)"/>
<!-- stars -->
<use href="#star" transform="translate(590.6,398.75) rotate(14) scale(1.1,1.3)"/>
<use href="#star" transform="translate(327.5,533) scale(1.15,0.98)"/>
<use href="#star" transform="translate(506.2,482.2) rotate(-17) scale(0.72,0.88)"/>
</svg></div>

<svg class="a" style="left:785.5px;top:55.5px" width="6.5" height="5" viewBox="0 0 8 6"><path d="M3 0.5L0 3L3 5.5ZM7 0.5L4 3L7 5.5Z" fill="#c4c4c4"/></svg>
<div class="a" style="left:773px;top:65.0px;width:17px;height:3px;background:repeating-linear-gradient(90deg,#424242 0 1px,#595959 1px 2px)"></div>
<div class="a" style="left:773px;top:141.0px;width:17px;height:3px;background:repeating-linear-gradient(90deg,#424242 0 1px,#595959 1px 2px)"></div>
<div class="a" style="left:773px;top:195.0px;width:17px;height:3px;background:repeating-linear-gradient(90deg,#424242 0 1px,#595959 1px 2px)"></div>
<div class="a" style="left:773px;top:251.0px;width:17px;height:3px;background:repeating-linear-gradient(90deg,#424242 0 1px,#595959 1px 2px)"></div>
<div class="a" style="left:773px;top:305.5px;width:17px;height:3px;background:repeating-linear-gradient(90deg,#424242 0 1px,#595959 1px 2px)"></div>
<div class="a" style="left:767px;top:137.5px;width:29px;height:2px;background:#3a3a3a;border-bottom:1px solid #626262"></div>
<div class="a" style="left:767px;top:191.5px;width:29px;height:2px;background:#3a3a3a;border-bottom:1px solid #626262"></div>
<div class="a" style="left:767px;top:246.0px;width:29px;height:2px;background:#3a3a3a;border-bottom:1px solid #626262"></div>
<div class="a" style="left:767px;top:301.0px;width:29px;height:2px;background:#3a3a3a;border-bottom:1px solid #626262"></div>
<div class="a" style="left:767px;top:333.5px;width:29px;height:2px;background:#3a3a3a;border-bottom:1px solid #626262"></div>
<svg class="a" style="left:776.4px;top:74.2px" width="14.5" height="14.5" viewBox="0 0 18 18"><path d="M1 2H5V5.5H1ZM1 7.5H5V11H1Z" fill="none" stroke="#dedede" stroke-width="1.3"/><rect x="0.5" y="13" width="5" height="3.6" fill="#dedede"/><path d="M8 13.5Q14.5 12 13.5 6.5Q13 3.5 10 2.6" fill="none" stroke="#dedede" stroke-width="2"/><path d="M7 2.4L11.6 0.4L11 5.2Z" fill="#dedede"/></svg>
<svg class="a" style="left:775.4px;top:96.0px" width="14.5" height="14.5" viewBox="0 0 18 18"><path d="M2 1.5L16 9L2 16.5Z" fill="#dedede"/></svg>
<svg class="a" style="left:774.5px;top:117.4px" width="16.0" height="16.0" viewBox="0 0 18 18"><path d="M1 3L6 1L9 4.5V12.5L6.5 10L1 11Z M9 6.5L15 5.5L17 8V16L11 17L9 12.5" fill="none" stroke="#dedede" stroke-width="1.4" stroke-linejoin="round"/><path d="M2.5 4.5L7.5 9.5M10.5 8L15.5 15" stroke="#dedede" stroke-width="1"/></svg>
<svg class="a" style="left:773.4px;top:148.3px" width="16.5" height="16.5" viewBox="0 0 18 18"><path d="M5 9H13V17H5Z" fill="#dedede"/><path d="M6.5 9L3.5 2.5M9 9V1.5M11.5 9L14.5 2.5" stroke="#dedede" stroke-width="1.7" stroke-linecap="round"/><circle cx="3.2" cy="2.4" r="1.5" fill="#dedede"/><circle cx="9" cy="1.6" r="1.5" fill="#dedede"/><circle cx="14.8" cy="2.4" r="1.5" fill="#dedede"/></svg>
<svg class="a" style="left:773.4px;top:170.8px" width="16.5" height="16.5" viewBox="0 0 18 18"><path d="M0.5 5H17.5" stroke="#dedede" stroke-width="1.6"/><path d="M2 3.2Q5 1.2 8.5 3.8L10 5.4H3Q1.6 4.6 2 3.2Z" fill="#dedede"/><path d="M0.5 12.5H12" stroke="#dedede" stroke-width="1.6"/><ellipse cx="14" cy="12.5" rx="3.2" ry="3.6" fill="#dedede"/></svg>
<svg class="a" style="left:775.2px;top:205.2px" width="14.0" height="14.0" viewBox="0 0 18 18"><path d="M0.8 15L5.6 2.6H7.8L12.6 15H10.4L9.2 11.6H4.2L3 15ZM4.9 9.8H8.5L6.7 4.8Z" fill="#dedede"/><path d="M15.2 1V17" stroke="#dedede" stroke-width="1.3"/></svg>
<svg class="a" style="left:775.5px;top:227.2px" width="13.5" height="13.5" viewBox="0 0 18 18"><path d="M9 2H15.5V3.8H14.2V17H12.5V3.8H10.7V17H9V10Q4.2 10 4.2 6Q4.2 2 9 2Z" fill="#dedede"/></svg>
<svg class="a" style="left:775.0px;top:259.1px" width="13.5" height="13.5" viewBox="0 0 18 18"><rect x="2" y="1.5" width="14" height="15" fill="none" stroke="#dedede" stroke-width="1.7"/><path d="M2 10.5H16" stroke="#dedede" stroke-width="1.6"/><rect x="4.6" y="4" width="4" height="4.4" fill="#dedede"/><path d="M10 4.6H14M10 7.4H14" stroke="#dedede" stroke-width="1.2"/></svg>
<svg class="a" style="left:775.0px;top:282.2px" width="13.5" height="13.5" viewBox="0 0 18 18"><path d="M2 1.5H16V12.5L12 16.5H2Z" fill="#dedede"/><path d="M4.4 5H13.6M4.4 8H13.6M4.4 11H11M4.4 14H9" stroke="#535353" stroke-width="1.3"/><path d="M12 16.5V12.5H16" fill="#8a8a8a"/></svg>
<svg class="a" style="left:772.2px;top:311.2px" width="19.5" height="19.5" viewBox="0 0 18 18"><path d="M3 17L15.5 3.5M15 17L4 4.5" stroke="#dedede" stroke-width="2" stroke-linecap="round"/><path d="M2.2 1.4Q1 4.6 3.4 7L6.4 4.4Q5.6 1.6 2.2 1.4Z" fill="#dedede"/><path d="M13.8 1.2L17.2 4.4L14.6 7L11.4 3.8Z" fill="#dedede"/></svg>
<!-- properties panel -->
<svg class="a" style="left:986px;top:55.5px" width="6.5" height="5" viewBox="0 0 8 6"><path d="M0 0.5L3 3L0 5.5ZM4 0.5L7 3L4 5.5Z" fill="#c4c4c4"/></svg>
<div class="a" style="left:798px;top:62px;width:199px;height:14px;background:#383838;border-bottom:1px solid #303030"></div>
<div class="a" style="left:798px;top:62px;width:31px;height:14px;background:#535353;border-right:1px solid #303030"></div>
<div class="a" style="left:829px;top:63px;width:30px;height:12px;background:#3d3d3d;border-right:1px solid #2e2e2e"></div>
<div class="lbl" style="left:804px;top:64.5px"><span class="t">属性</span></div>
<div class="lbl" style="left:835px;top:64.5px;color:#a0a0a0"><span class="t">颜色</span></div>
<svg class="a" style="left:981px;top:66px" width="11" height="7" viewBox="0 0 11 7"><path d="M0 1.5H4L2 4Z" fill="#b4b4b4"/><path d="M5 1H11M5 3.3H11M5 5.6H11" stroke="#b4b4b4" stroke-width="1"/></svg>
<div class="lbl" style="left:806px;top:86px"><span class="t">无属性</span></div>
<div class="a" style="left:798px;top:102px;width:199px;height:1px;background:#686868"></div>
<div class="a" style="left:798px;top:103px;width:199px;height:308px;background:#525252"></div>
<div class="a" style="left:984px;top:103px;width:12px;height:293px;background:linear-gradient(90deg,#404040,#4a4a4a)"></div>
<svg class="a" style="left:986px;top:402px" width="8" height="8" viewBox="0 0 8 8"><path d="M8 0L0 8M8 3L3 8M8 6L6 8" stroke="#686868" stroke-width="1"/></svg>
<div class="a" style="left:797px;top:411px;width:200px;height:3.5px;background:#323232"></div>
<!-- layers panel -->
<div class="a" style="left:798px;top:414px;width:199px;height:13px;background:#383838;border-bottom:1px solid #303030"></div>
<div class="a" style="left:798px;top:414px;width:31px;height:13px;background:#535353;border-right:1px solid #303030"></div>
<div class="a" style="left:829px;top:415px;width:31px;height:11px;background:#3d3d3d;border-right:1px solid #2e2e2e"></div>
<div class="a" style="left:860px;top:415px;width:31px;height:11px;background:#3d3d3d;border-right:1px solid #2e2e2e"></div>
<div class="lbl" style="left:804px;top:416px"><span class="t">图层</span></div>
<div class="lbl" style="left:835px;top:416px;color:#a0a0a0"><span class="t">通道</span></div>
<div class="lbl" style="left:866px;top:416px;color:#a0a0a0"><span class="t">路径</span></div>
<svg class="a" style="left:981px;top:417px" width="11" height="7" viewBox="0 0 11 7"><path d="M0 1.5H4L2 4Z" fill="#b4b4b4"/><path d="M5 1H11M5 3.3H11M5 5.6H11" stroke="#b4b4b4" stroke-width="1"/></svg>
<!-- filter row -->
<div class="a" style="left:802px;top:431px;width:64px;height:15px;border:1px solid #2f2f2f;border-radius:3px;background:linear-gradient(#727272,#5a5a5a)"></div>
<svg class="a" style="left:806px;top:434px" width="9" height="10" viewBox="0 0 9 10"><circle cx="5" cy="3.8" r="2.8" fill="none" stroke="#eee" stroke-width="1.3"/><path d="M3 6L0.8 9" stroke="#eee" stroke-width="1.5"/></svg>
<div class="lbl" style="left:818px;top:434px"><span class="t">类型</span></div>
<svg class="a" style="left:857px;top:434px" width="6" height="9" viewBox="0 0 6 9"><path d="M0.5 3.5L3 0.5L5.5 3.5ZM0.5 5.5L3 8.5L5.5 5.5Z" fill="#eee"/></svg>
<svg class="a" style="left:877.5px;top:434px" width="11" height="10" viewBox="0 0 12 11"><rect x="0.6" y="0.6" width="10.8" height="9.8" fill="none" stroke="#ddd" stroke-width="1.2"/><path d="M1.5 9L4.5 5L6.5 7.5L8 6L10.5 9Z" fill="#ddd"/><circle cx="8.3" cy="3.4" r="1.1" fill="#ddd"/></svg>
<svg class="a" style="left:897px;top:434px" width="9.5" height="9.5" viewBox="0 0 11 11"><circle cx="5.5" cy="5.5" r="4.6" fill="#8a8a8a" stroke="#ddd" stroke-width="1.2"/><path d="M2.2 8.8A4.6 4.6 0 0 1 8.8 2.2Z" fill="#e4e4e4"/></svg>
<div class="a" style="left:917px;top:432px;font-family:'Liberation Serif',serif;font-size:12px;font-weight:bold;color:#ddd;will-change:transform">T</div>
<svg class="a" style="left:935px;top:434px" width="10.5" height="10.5" viewBox="0 0 12 12"><rect x="2" y="2" width="8" height="8" fill="none" stroke="#ddd" stroke-width="1.2"/><rect x="0" y="0" width="3.4" height="3.4" fill="#ddd"/><rect x="8.6" y="0" width="3.4" height="3.4" fill="#ddd"/><rect x="0" y="8.6" width="3.4" height="3.4" fill="#ddd"/><rect x="8.6" y="8.6" width="3.4" height="3.4" fill="#ddd"/></svg>
<svg class="a" style="left:954px;top:433px" width="10.5" height="11.5" viewBox="0 0 12 13"><path d="M3 0.6H8L11 3.6V9H3Z" fill="none" stroke="#ddd" stroke-width="1.2"/><rect x="0.6" y="6.4" width="6" height="6" fill="#ddd"/></svg>
<div class="a" style="left:976px;top:431px;width:8px;height:16px;border:1px solid #2c2c2c;border-radius:1px;background:linear-gradient(#6a6a6a 0 35%,#333 55%,#2c2c2c)"></div>
<div class="a" style="left:798px;top:449px;width:186px;height:1px;background:#484848"></div>
<!-- blend row -->
<div class="a" style="left:802px;top:453px;width:87px;height:15px;border:1px solid #2f2f2f;border-radius:3px;background:linear-gradient(#727272,#5a5a5a)"></div>
<div class="lbl" style="left:808px;top:456px"><span class="t">正常</span></div>
<svg class="a" style="left:880px;top:456px" width="6" height="9" viewBox="0 0 6 9"><path d="M0.5 3.5L3 0.5L5.5 3.5ZM0.5 5.5L3 8.5L5.5 5.5Z" fill="#eee"/></svg>
<div class="lbl" style="left:896px;top:456px"><span class="t">不透明度:</span></div>
<div class="a" style="left:941px;top:453px;width:29px;height:15px;background:#3a3a3a;border:1px solid #2c2c2c"></div>
<div class="lbl" style="left:944px;top:456px">100%</div>
<div class="a" style="left:970px;top:453px;width:15px;height:15px;border:1px solid #2f2f2f;border-radius:0 2px 2px 0;background:linear-gradient(#777,#5c5c5c)"></div>
<div class="a" style="left:974.5px;top:459px;border:3px solid transparent;border-top:3.5px solid #eee"></div>
<!-- lock row -->
<div class="lbl" style="left:804px;top:477px"><span class="t">锁定:</span></div>
<svg class="a" style="left:832.5px;top:479px" width="9" height="9" viewBox="0 0 10 10"><rect width="10" height="10" fill="#d8d8d8"/><path d="M0 0H2.5V2.5H0ZM5 0H7.5V2.5H5ZM2.5 2.5H5V5H2.5ZM7.5 2.5H10V5H7.5ZM0 5H2.5V7.5H0ZM5 5H7.5V7.5H5ZM2.5 7.5H5V10H2.5ZM7.5 7.5H10V10H7.5Z" fill="#777"/></svg>
<svg class="a" style="left:849px;top:477px" width="12.5" height="11.5" viewBox="0 0 14 13"><path d="M13.4 0.8Q14 1.6 13.2 2.4L7.6 8L6 6.4L12 1Q12.8 0.3 13.4 0.8Z" fill="#e0e0e0"/><path d="M5.2 7.2L7 9Q6 12 0.6 12.2Q3 10.6 3.2 9Q3.6 7.4 5.2 7.2Z" fill="#e0e0e0"/></svg>
<svg class="a" style="left:867px;top:478px" width="10.5" height="10.5" viewBox="0 0 12 12"><path d="M6 0.5V11.5M0.5 6H11.5" stroke="#e0e0e0" stroke-width="1.2"/><path d="M6 0L7.8 2.4H4.2ZM6 12L7.8 9.6H4.2ZM0 6L2.4 4.2V7.8ZM12 6L9.6 4.2V7.8Z" fill="#e0e0e0"/></svg>
<svg class="a" style="left:886px;top:478px" width="8.5" height="11" viewBox="0 0 10 13"><path d="M2.4 6V3.6Q2.4 1 5 1Q7.6 1 7.6 3.6V6" fill="none" stroke="#e0e0e0" stroke-width="1.5"/><rect x="0.6" y="5.6" width="8.8" height="6.8" rx="0.8" fill="#e0e0e0"/><rect x="4.3" y="7.6" width="1.4" height="2.8" fill="#555"/></svg>
<div class="lbl" style="left:915px;top:477px"><span class="t">填充:</span></div>
<div class="a" style="left:941px;top:475px;width:29px;height:15px;background:#3a3a3a;border:1px solid #2c2c2c"></div>
<div class="lbl" style="left:944px;top:478px">100%</div>
<div class="a" style="left:970px;top:475px;width:15px;height:15px;border:1px solid #2f2f2f;border-radius:0 2px 2px 0;background:linear-gradient(#777,#5c5c5c)"></div>
<div class="a" style="left:974.5px;top:481px;border:3px solid transparent;border-top:3.5px solid #eee"></div>
<div class="a" style="left:798px;top:494px;width:199px;height:1px;background:#3e3e3e"></div>
<!-- layer list -->
<div class="a" style="left:798px;top:495px;width:186px;height:254px;background:#484848"></div>
<div class="a" style="left:984px;top:495px;width:13px;height:254px;background:#505050;border-left:1px solid #414141"></div>
<div class="a" style="left:798px;top:495px;width:186px;height:27px;background:#535353"></div>
<div class="a" style="left:823px;top:495px;width:161px;height:27px;background:#697e9d"></div>
<div class="a" style="left:798px;top:522px;width:186px;height:1px;background:#3e3e3e"></div>
<div class="a" style="left:798px;top:523px;width:186px;height:27px;background:#535353"></div>
<div class="a" style="left:798px;top:550px;width:186px;height:1px;background:#3e3e3e"></div>
<div class="a" style="left:822px;top:495px;width:1px;height:55px;background:#404040"></div>
<svg class="a" style="left:804.5px;top:504.5px" width="11.5" height="8" viewBox="0 0 13 9"><path d="M0.5 4.5Q6.5 -2.5 12.5 4.5Q6.5 11.5 0.5 4.5Z" fill="#d6d6d6"/><circle cx="6.5" cy="4.4" r="2.3" fill="#4a4a4a"/><circle cx="5.8" cy="3.6" r="0.8" fill="#d6d6d6"/></svg>
<div class="a" style="left:805px;top:531px;width:10px;height:10px;background:#4b4b4b;border:1px solid #404040"></div>
<!-- thumb 1 -->
<svg class="a" style="left:823px;top:496px" width="29" height="26" viewBox="0 0 29 26"><rect x="0.5" y="0.5" width="28" height="25" fill="none" stroke="#fff" stroke-width="1"/><rect x="2" y="2" width="25" height="22" fill="#f4f4f4"/><path d="M2 2H5.1V5.1H2ZM8.2 2H11.3V5.1H8.2ZM14.4 2H17.5V5.1H14.4ZM20.6 2H23.7V5.1H20.6ZM5.1 5.1H8.2V8.2H5.1ZM17.5 5.1H20.6V8.2H17.5ZM23.7 5.1H27V8.2H23.7ZM2 8.2H5.1V11.3H2ZM20.6 8.2H23.7V11.3H20.6ZM23.7 11.3H27V14.4H23.7ZM2 14.4H5.1V17.5H2ZM20.6 14.4H23.7V17.5H20.6ZM5.1 17.5H8.2V20.6H5.1ZM17.5 17.5H20.6V20.6H17.5ZM23.7 17.5H27V20.6H23.7ZM8.2 20.6H11.3V24H8.2ZM20.6 20.6H23.7V24H20.6ZM2 20.6H5.1V24H2Z" fill="#ccc"/><path d="M8 5L15 3.2L17 7L12 9.5L9 9Z" fill="#8e5430"/><path d="M11 7L17 4L20 9L17 14L10 10Z" fill="#f8f3dc"/><path d="M13 10.5L17.5 9.5L16.5 13.5Z" fill="#e9573c"/><path d="M7.5 9L16 14.5L21.5 6.5L22 7L19 15L20 21L14.5 21.5L14 16Z" fill="#fc9737"/><path d="M14 21.5H20.5L21 24H14.5Z" fill="#1da9c9"/><path d="M2.5 18L6 15L10 18L6.5 22.5Z" fill="#f06a18"/><path d="M23.5 19L25.5 17.5L27 19.5L25 21.5Z" fill="#f06a18"/></svg>
<div class="lbl" style="left:858px;top:504px"><span class="t">人物</span></div>
<!-- thumb 2 -->
<div class="a" style="left:825px;top:525px;width:27px;height:23px;background:#fff;border:1px solid #2e2e2e"></div>
<div class="lbl" style="left:860px;top:532px;font-style:italic;transform:skewX(-12deg)"><span class="t">背景</span></div>
<svg class="a" style="left:962px;top:530px" width="9" height="11" viewBox="0 0 9 11"><path d="M2.2 5V3.2Q2.2 1 4.5 1Q6.8 1 6.8 3.2V5" fill="none" stroke="#e0e0e0" stroke-width="1.2"/><rect x="0.8" y="4.8" width="7.4" height="5.6" fill="none" stroke="#e0e0e0" stroke-width="1.2"/><rect x="4" y="6.6" width="1" height="2" fill="#e0e0e0"/></svg>
<!-- bottom bar -->
<div class="a" style="left:798px;top:749px;width:199px;height:1px;background:#383838"></div>
<div class="a" style="left:798px;top:750px;width:199px;height:15px;background:#505050"></div>
<svg class="a" style="left:835px;top:753.5px" width="12" height="8" viewBox="0 0 12 8"><rect x="0.8" y="1.2" width="6" height="5.6" rx="2.8" fill="none" stroke="#bbb" stroke-width="1.4"/><rect x="5.2" y="1.2" width="6" height="5.6" rx="2.8" fill="none" stroke="#bbb" stroke-width="1.4"/></svg>
<div class="a" style="left:857.5px;top:751.5px;font-family:'Liberation Serif',serif;font-style:italic;font-weight:bold;font-size:11px;color:#dcdcdc;transform:translateZ(0)">fx</div>
<div class="a" style="left:869px;top:761px;border:1.5px solid transparent;border-top:2px solid #ddd"></div>
<svg class="a" style="left:878.5px;top:753px" width="11" height="9" viewBox="0 0 11 9"><rect width="11" height="9" fill="#e0e0e0"/><circle cx="5.5" cy="4.5" r="2.6" fill="#4e4e4e"/></svg>
<svg class="a" style="left:900px;top:752.5px" width="10" height="10" viewBox="0 0 10 10"><circle cx="5" cy="5" r="4.3" fill="#5a5a5a" stroke="#e0e0e0" stroke-width="1.3"/><path d="M1.9 8.1A4.3 4.3 0 0 1 8.1 1.9Z" fill="#e0e0e0"/></svg>
<div class="a" style="left:911px;top:761px;border:1.5px solid transparent;border-top:2px solid #ddd"></div>
<svg class="a" style="left:921px;top:753px" width="11" height="9" viewBox="0 0 11 9"><path d="M0 0.5H4L5 2H11V9H0Z" fill="#e0e0e0"/></svg>
<svg class="a" style="left:943px;top:752.5px" width="10" height="10" viewBox="0 0 10 10"><path d="M0.5 0.5H9.5V9.5H4.5V5.5H0.5Z" fill="#e0e0e0"/><path d="M0.8 6.2L3.8 9.2" stroke="#e0e0e0" stroke-width="1"/></svg>
<svg class="a" style="left:964px;top:752px" width="9" height="11" viewBox="0 0 9 11"><path d="M0 2H9M3 2V0.6H6V2" fill="none" stroke="#e0e0e0" stroke-width="1.2"/><path d="M0.8 3.2H8.2L7.6 11H1.4Z" fill="#e0e0e0"/><path d="M3 4.6V9.6M4.5 4.6V9.6M6 4.6V9.6" stroke="#555" stroke-width="0.7"/></svg>

<div class="a" style="left:995px;top:53px;width:1px;height:712px;background:#303030"></div><div class="a" style="left:996px;top:26px;width:1px;height:739px;background:#585858"></div><div class="a" style="left:997px;top:0;width:3px;height:768px;background:#343434"></div>
<div class="a" style="left:0;top:0;width:3px;height:768px;background:#363636"></div><div class="a" style="left:3px;top:26px;width:1px;height:739px;background:#585858"></div><div class="a" style="left:3px;top:765px;width:994px;height:1px;background:#565656"></div><div class="a" style="left:0;top:766px;width:1000px;height:2px;background:#363636"></div>
</body></html>
